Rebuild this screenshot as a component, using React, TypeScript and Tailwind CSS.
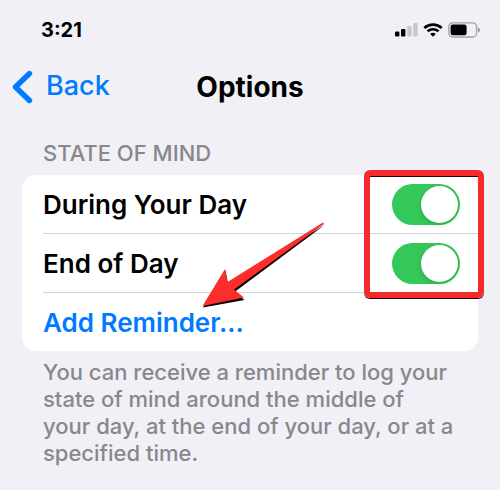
import { useState } from 'react'

function SignalIcon() {
  return (
    <svg width="23" height="14" viewBox="0 0 23 14" aria-hidden="true">
      <rect x="0" y="8.5" width="4.4" height="5" rx="1.2" fill="#000" />
      <rect x="6" y="6" width="4.4" height="7.5" rx="1.2" fill="#000" />
      <rect x="12.2" y="3" width="4.4" height="10.5" rx="1.2" fill="#c8c8cb" />
      <rect x="18.3" y="0" width="4.4" height="13.5" rx="1.2" fill="#c8c8cb" />
    </svg>
  )
}

function WifiIcon() {
  return (
    <svg width="20" height="14" viewBox="0 0 20 14" fill="none" aria-hidden="true">
      <path d="M1.3 4.9C6.2.5 13.8.5 18.7 4.9" stroke="#000" strokeWidth="2.7" />
      <path d="M4.6 8.3c3.1-2.7 7.7-2.7 10.8 0" stroke="#000" strokeWidth="2.6" />
      <path d="M7.2 10.9c1.6-1.4 4-1.4 5.6 0L10 13.8z" fill="#000" />
    </svg>
  )
}

function BatteryIcon() {
  return (
    <svg width="32" height="16" viewBox="0 0 32 16" fill="none" aria-hidden="true">
      <rect x="0.8" y="0.8" width="27.8" height="14.2" rx="4" stroke="#a2a2a5" strokeWidth="1.3" />
      <rect x="2.6" y="2.6" width="16" height="10.6" rx="2.2" fill="#000" />
      <path d="M30 5.4c2.4.8 2.4 4.2 0 5z" fill="#8e8e92" />
    </svg>
  )
}

function Toggle({ id }: { id: string }) {
  const [on, setOn] = useState(true)

  return (
    <input
      id={id}
      type="checkbox"
      role="switch"
      checked={on}
      onChange={(e) => setOn(e.target.checked)}
      className="flex h-[41px] w-[68px] shrink-0 cursor-pointer appearance-none items-center justify-start rounded-full bg-[#e9e9eb] p-[2px] before:size-[37px] before:rounded-full before:bg-white before:shadow-[0_2px_5px_rgba(0,0,0,0.15)] checked:justify-end checked:bg-[#34c759]"
    />
  )
}

export default function App() {
  return (
    <div className="min-h-screen bg-[#f1f0f6] font-['Inter','Liberation_Sans',sans-serif] text-black">
      {/* Status bar */}
      <div className="flex h-[60px] items-center justify-between pr-5 pl-[41px]">
        <span className="text-[20px] font-bold">3:21</span>
        <div className="flex items-center gap-[5px]">
          <SignalIcon />
          <WifiIcon />
          <BatteryIcon />
        </div>
      </div>

      {/* Nav bar */}
      <header className="grid h-[53px] grid-cols-3 items-center px-3">
        <button className="flex cursor-pointer items-center gap-[13px] text-[27px] font-medium text-[#007aff]">
          <svg width="21" height="34" viewBox="0 0 21 34" fill="none" aria-hidden="true">
            <path
              d="M17.5 3.5 3.5 17l14 13.5"
              stroke="currentColor"
              strokeWidth="5.4"
              strokeLinecap="round"
              strokeLinejoin="round"
            />
          </svg>
          Back
        </button>
        <h1 className="text-center text-[28px] font-bold">Options</h1>
      </header>

      {/* Reminders */}
      <main className="px-[22px] pt-[27px]">
        <h2 className="px-[21px] pb-[8px] text-[22px] leading-[27px] font-medium text-[#88888c] uppercase">
          State of Mind
        </h2>
        <div className="relative rounded-[14px] bg-white pl-[21px] text-[26px] font-semibold">
          <div className="flex h-[59px] items-center justify-between border-b border-[#d4d4d6] pr-[18px]">
            <label htmlFor="during-day">During Your Day</label>
            <Toggle id="during-day" />
          </div>
          <div className="flex h-[59px] items-center justify-between border-b border-[#d4d4d6] pr-[18px]">
            <label htmlFor="end-of-day">End of Day</label>
            <Toggle id="end-of-day" />
          </div>
          <button className="flex h-[58px] w-full cursor-pointer items-center text-[#007aff]">
            Add Reminder...
          </button>

          {/* Highlight around the toggles */}
          <div className="pointer-events-none absolute -top-[5px] -right-[6px] h-[128px] w-[120px] rounded-[6px] border-[6px] border-[#f32b2c] shadow-[0_1px_0_#200,inset_0_1px_0_#200]" />

          {/* Arrow to the add button */}
          <svg
            className="pointer-events-none absolute top-[46px] left-[178px]"
            width="130"
            height="90"
            viewBox="0 0 130 90"
            aria-hidden="true"
          >
            <path d="M124 2.5 27.5 61 25 48 2.5 85 44 77.5 34 69.5z" fill="#100" transform="translate(0.5 1.6)" />
            <path d="M123 1.5 27.5 61 25 48 2.5 85 44 76.5 34 68.5 124 3z" fill="#fb2d2d" />
          </svg>
        </div>
        <p className="pt-[8px] pr-6 pl-[21px] text-[22px] leading-[27px] font-medium text-[#88888c]">
          You can receive a reminder to log your state of mind around the middle of your day, at the
          end of your day, or at a specified time.
        </p>
      </main>
    </div>
  )
}
